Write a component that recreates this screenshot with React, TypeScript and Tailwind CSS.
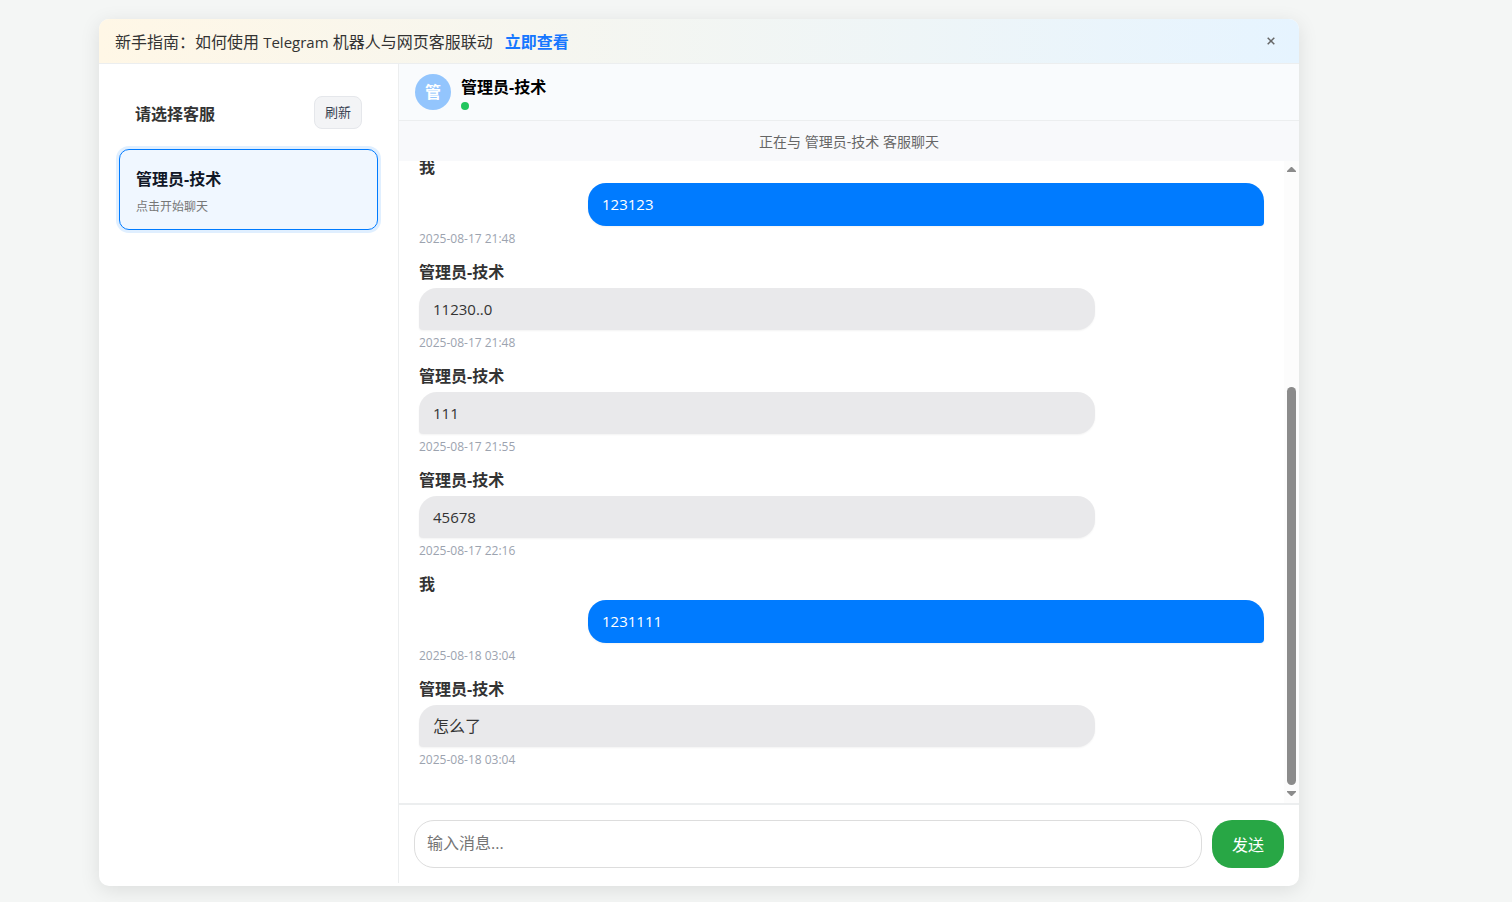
import { useState } from "react";

type Message = {
  id: number;
  author: string;
  mine: boolean;
  text: string;
  time: string;
};

const AGENT = "管理员-技术";

const messages: Message[] = [
  { id: 1, author: "我", mine: true, text: "123123", time: "2025-08-17 21:48" },
  { id: 2, author: AGENT, mine: false, text: "11230..0", time: "2025-08-17 21:48" },
  { id: 3, author: AGENT, mine: false, text: "111", time: "2025-08-17 21:55" },
  { id: 4, author: AGENT, mine: false, text: "45678", time: "2025-08-17 22:16" },
  { id: 5, author: "我", mine: true, text: "1231111", time: "2025-08-18 03:04" },
  { id: 6, author: AGENT, mine: false, text: "怎么了", time: "2025-08-18 03:04" },
];

function Banner({ onClose }: { onClose: () => void }) {
  return (
    <div className="flex h-[45px] shrink-0 items-center gap-3 border-b border-[#eceeef] bg-linear-to-r from-[#fff7e6] to-[#e6f4ff] px-4 pt-0.5 text-base">
      <p className="whitespace-nowrap">
        新手指南：如何使用 <span className="text-[15px]">Telegram</span> 机器人与网页客服联动
      </p>
      <a href="#guide" className="font-bold whitespace-nowrap text-[#1677ff]">
        立即查看
      </a>
      <button
        type="button"
        aria-label="关闭"
        onClick={onClose}
        className="mb-0.5 ml-auto flex size-6 items-center justify-center text-[#666666]"
      >
        <svg viewBox="0 0 8 8" className="size-2" fill="none" stroke="currentColor" strokeWidth="1.5">
          <path d="M0.7 0.7 7.3 7.3M7.3 0.7 0.7 7.3" />
        </svg>
      </button>
    </div>
  );
}

function Sidebar() {
  return (
    <aside className="flex w-[300px] shrink-0 flex-col gap-5 border-r border-[#eceeef] px-5 pt-8">
      <div className="flex items-center justify-between px-4">
        <h2 className="pt-0.5 text-base font-bold">请选择客服</h2>
        <button
          type="button"
          className="h-[33px] w-12 rounded-lg border border-[#e5e7eb] bg-[#f3f4f6] text-[13px] text-[#374151]"
        >
          刷新
        </button>
      </div>
      <button
        type="button"
        className="flex h-[81px] flex-col justify-center gap-1.5 rounded-[10px] border border-[#007bff] bg-[#f0f7ff] px-4 pt-1 text-left ring-3 ring-[#007bff]/12"
      >
        <span className="text-base leading-6 font-bold text-[#111827]">{AGENT}</span>
        <span className="text-xs leading-5 text-[#777777]">点击开始聊天</span>
      </button>
    </aside>
  );
}

function MessageRow({ message }: { message: Message }) {
  const latin = /^[\x20-\x7e]+$/.test(message.text);
  return (
    <li className="mb-3">
      <div className="mb-1 text-base leading-6 font-bold">{message.author}</div>
      <div
        className={`w-4/5 px-3.5 py-2.5 shadow-[0_1px_2px_rgba(0,0,0,0.05)] ${
          latin ? "text-[15px]" : "text-base"
        } ${
          message.mine
            ? "ml-auto rounded-[18px] rounded-br-[4px] bg-[#007bff] leading-[23px] text-white"
            : "rounded-[18px] rounded-bl-[4px] bg-[#e9e9eb] leading-[22px]"
        }`}
      >
        {message.text}
      </div>
      <time className="mt-1 block text-xs leading-[18px] text-[#9ca3af]">{message.time}</time>
    </li>
  );
}

function ScrollTrack() {
  return (
    <div aria-hidden="true" className="flex w-[15px] shrink-0 flex-col items-center bg-[#fcfcfc] pt-1.5 pb-[7px]">
      <svg viewBox="0 0 9 5" className="h-[5px] w-[9px] fill-[#8b8b8b]">
        <path d="M0 5V4L4 0H5L9 4V5Z" />
      </svg>
      <div className="my-1.5 flex min-h-0 flex-1 flex-col justify-end self-stretch px-[3px]">
        <div className="h-[65.5%] rounded-full bg-[#8b8b8b]" />
      </div>
      <svg viewBox="0 0 9 5" className="h-[5px] w-[9px] fill-[#8b8b8b]">
        <path d="M0 0V1L4 5H5L9 1V0Z" />
      </svg>
    </div>
  );
}

export default function App() {
  const [bannerOpen, setBannerOpen] = useState(true);
  const [draft, setDraft] = useState("");

  return (
    <div className="flex h-screen bg-[#f4f6f5] pt-[19px] pb-4 pl-[99px] font-['Open_Sans','Noto_Sans_CJK_SC',sans-serif] text-[#333333]">
      <main className="flex w-full max-w-[1200px] flex-col overflow-hidden rounded-[10px] bg-white shadow-[0_4px_20px_rgba(0,0,0,0.1)]">
        {bannerOpen && <Banner onClose={() => setBannerOpen(false)} />}
        <div className="mb-[3px] flex min-h-0 flex-1">
          <Sidebar />
          <section className="flex min-w-0 flex-1 flex-col">
            <header className="flex h-[57px] shrink-0 items-center gap-2.5 border-b border-[#eceeef] bg-[#f9fbfd] px-4">
              <div className="flex size-9 items-center justify-center rounded-full bg-[#93c5fd] text-base font-bold text-white">
                管
              </div>
              <div className="flex flex-col gap-0.5">
                <h1 className="text-base leading-[26px] font-bold text-black">{AGENT}</h1>
                <span role="status" aria-label="在线" className="size-2 rounded-full bg-[#22c55e]" />
              </div>
            </header>
            <p className="shrink-0 bg-[#f8f9fb] pt-[11px] pb-[9px] text-center text-sm leading-5 text-[#666666]">
              正在与 {AGENT} 客服聊天
            </p>
            <div className="flex min-h-0 flex-1">
              <div className="flex min-w-0 flex-1 flex-col-reverse overflow-y-auto px-5 pb-[22px] [scrollbar-width:none]">
                <ul>
                  {messages.map((message) => (
                    <MessageRow key={message.id} message={message} />
                  ))}
                </ul>
              </div>
              <ScrollTrack />
            </div>
            <form
              className="flex shrink-0 gap-2.5 border-t-2 border-[#eceeef] p-[15px]"
              onSubmit={(event) => {
                event.preventDefault();
                setDraft("");
              }}
            >
              <input
                type="text"
                aria-label="输入消息"
                placeholder="输入消息..."
                value={draft}
                onChange={(event) => setDraft(event.target.value)}
                className="h-12 min-w-0 flex-1 rounded-[20px] border border-[#dddddd] px-3 pb-0.5 text-base outline-none placeholder:text-[#757575]"
              />
              <button type="submit" className="h-12 w-[72px] rounded-[20px] bg-[#28a745] pt-0.5 text-base text-white">
                发送
              </button>
            </form>
          </section>
        </div>
      </main>
    </div>
  );
}
